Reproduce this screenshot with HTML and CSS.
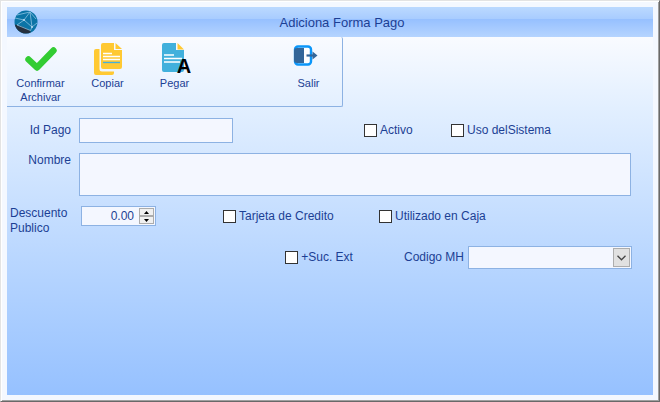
FILE: index.html
```html
<!DOCTYPE html>
<html lang="es">
<head>
    <meta charset="UTF-8">
    <meta name="viewport" content="width=device-width, initial-scale=1.0">
    <title>Adiciona Forma Pago</title>
    <link rel="stylesheet" href="styles.css">
</head>
<body>
    <div class="window">
        <header class="titlebar">
            <svg class="logo" viewBox="0 0 24 24" aria-hidden="true">
                <circle cx="12" cy="12" r="11.5" fill="#0b74a6"/>
                <path d="M0.8 14.5 L7 16 L16.5 20.5 L16.5 22.6 A11.5 11.5 0 0 1 0.8 14.5Z" fill="#26303f"/>
                <path d="M3 5 L16 2 L10 10 L1 8 M16 2 L18 17 L10 10 L3 15 L16.500 20.500 L18 17 L23 13 M16 2 L22 9" fill="none" stroke="#8cc3e2" stroke-width="0.8"/>
                <circle cx="10" cy="10" r="1.1" fill="#b5d8ee"/>
                <circle cx="18" cy="17" r="1" fill="#b5d8ee"/>
            </svg>
            <h1>Adiciona Forma Pago</h1>
        </header>

        <main class="content">
            <div class="toolbar">
                <button type="submit" form="formaPago" class="tool">
                    <svg viewBox="0 0 33 34" aria-hidden="true">
                        <path d="M4.500 17.500 L13 25.500 L29.500 8.500" fill="none" stroke="#33cc33" stroke-width="6.400" stroke-linecap="round" stroke-linejoin="round"/>
                    </svg>
                    <span>Confirmar Archivar</span>
                </button>
                <button type="button" class="tool">
                    <svg viewBox="0 0 33 34" aria-hidden="true">
                        <path d="M5 7 H8.500 V27 Q8.500 29.500 11 29.500 H23 V31 Q23 33 21 33 H5 Q3 33 3 31 V9 Q3 7 5 7Z" fill="#ffc933"/>
                        <path d="M12 1 H23 V8 H31 V25 Q31 27 29 27 H12 Q10 27 10 25 V3 Q10 1 12 1Z" fill="#ffc933"/>
                        <path d="M24.500 1 L31 7 H24.500Z" fill="#ffc933"/>
                        <path d="M12 11.500 H21 M12 14.500 H29 M12 17.500 H29" stroke="#fff" stroke-width="1.300"/>
                        <path d="M12 20.500 H29" stroke="#45b0dd" stroke-width="1.300"/>
                    </svg>
                    <span>Copiar</span>
                </button>
                <button type="button" class="tool">
                    <svg viewBox="0 0 33 34" aria-hidden="true">
                        <path d="M6 1 H18 V8 H26 V28 Q26 30 24 30 H6 Q4 30 4 28 V3 Q4 1 6 1Z" fill="#41b0dc"/>
                        <path d="M19.500 1 L26 7.500 H19.500Z" fill="#ffc933"/>
                        <path d="M6 13 H16 M6 16.500 H24 M6 20 H22" stroke="#fff" stroke-width="1.300"/>
                        <text x="26" y="31" class="paste-letter">A</text>
                    </svg>
                    <span>Pegar</span>
                </button>
                <button type="button" class="tool tool-exit">
                    <svg viewBox="0 0 33 34" aria-hidden="true">
                        <rect x="3" y="4.500" width="16" height="18" rx="3" fill="#fff" stroke="#0a96fa" stroke-width="2.400"/>
                        <path d="M2 9 Q2 6 5 6 H12 V21 H5 Q2 21 2 18Z" fill="#336699"/>
                        <path d="M14.500 13.500 H23" stroke="#336699" stroke-width="2.200"/>
                        <path d="M20.500 9.500 L25.500 13.500 L20.500 17.500Z" fill="#336699"/>
                    </svg>
                    <span>Salir</span>
                </button>
            </div>

            <form id="formaPago" class="form">
                <div class="row row-id">
                    <label class="caption" for="idPago">Id Pago</label>
                    <input type="text" id="idPago" class="box id-box">
                    <label class="check active"><input type="checkbox">Activo</label>
                    <label class="check"><input type="checkbox">Uso delSistema</label>
                </div>

                <div class="row">
                    <label class="caption" for="nombre">Nombre</label>
                    <textarea id="nombre" class="box name-box"></textarea>
                </div>

                <div class="row">
                    <label class="caption caption-left" for="descuento">Descuento Publico</label>
                    <div class="box spinner">
                        <input type="text" id="descuento" value="0.00" inputmode="decimal">
                        <div class="spin-buttons">
                            <button type="button" aria-label="Subir"><svg viewBox="0 0 5 3"><path d="M0 3 L2.500 0 L5 3Z"/></svg></button>
                            <button type="button" aria-label="Bajar"><svg viewBox="0 0 5 3"><path d="M0 0 L2.500 3 L5 0Z"/></svg></button>
                        </div>
                    </div>
                    <label class="check card"><input type="checkbox">Tarjeta de Credito</label>
                    <label class="check"><input type="checkbox">Utilizado en Caja</label>
                </div>

                <div class="row row-code">
                    <label class="check"><input type="checkbox">+Suc. Ext</label>
                    <label class="code-caption" for="codigoMh">Codigo MH</label>
                    <div class="combo">
                        <select id="codigoMh" class="box">
                            <option value=""></option>
                        </select>
                        <span class="combo-arrow">
                            <svg viewBox="0 0 9 6"><path d="M0.500 0.800 L4.500 4.800 L8.500 0.800" fill="none" stroke="#444" stroke-width="1.300"/></svg>
                        </span>
                    </div>
                </div>
            </form>
        </main>
    </div>
</body>
</html>
```
FILE: styles.css
```css
* {
    box-sizing: border-box;
}
body {
    margin: 0;
    font-family: "Liberation Sans", Arial, sans-serif;
    font-size: 12px;
    line-height: 15px;
    color: #1c3f94;
}
button, input, select, textarea {
    font: inherit;
    color: inherit;
    margin: 0;
}

/* window frame */
.window {
    display: flex;
    flex-direction: column;
    min-height: 100vh;
    padding: 6px;
    background-color: #f4f8ff;
    border: 1px solid;
    border-color: #e3e3e3 #696969 #696969 #e3e3e3;
    box-shadow: inset 1px 1px 0 #fff, inset -1px -1px 0 #a0a0a0;
}
.titlebar {
    display: flex;
    align-items: center;
    height: 30px;
    padding: 0 7px;
    background: linear-gradient(#bbd9ff 0%, #a8ccff 40%, #96c0ff 40%, #b5d4ff 100%);
}
.titlebar h1 {
    flex: 1;
    margin: 0;
    font-size: 13px;
    font-weight: normal;
    text-align: center;
}
.logo {
    width: 24px;
    height: 24px;
}
.content {
    flex: 1;
    background: linear-gradient(#f9fbff 0%, #e2efff 20%, #b3d3ff 68%, #96c1ff 100%);
}

/* toolbar */
.toolbar {
    display: flex;
    width: fit-content;
    height: 70px;
    border: solid #8db2e3;
    border-width: 0 1px 1px 0;
    border-radius: 0 2px 2px 0;
}
.tool {
    display: flex;
    flex-direction: column;
    align-items: center;
    width: 67px;
    padding: 5px 6px 0;
    border: none;
    background: none;
    font-size: 11px;
    line-height: 14px;
}
.tool svg {
    flex: none;
    width: 33px;
    height: 34px;
}
.tool-exit {
    margin-left: 67px;
}
.paste-letter {
    font-size: 20px;
    font-weight: bold;
    fill: #000;
    text-anchor: middle;
}

/* form */
.form {
    display: flex;
    flex-direction: column;
    gap: 10px;
    padding: 11px 22px 12px 0;
}
.row {
    display: flex;
    align-items: flex-start;
}
.row-id, .row-code {
    align-items: center;
}
.caption {
    flex: none;
    width: 72px;
    padding-right: 8px;
    text-align: right;
}
.caption-left {
    width: 74px;
    padding-left: 3px;
    text-align: left;
}
.box {
    border: 1px solid #8db2e3;
    border-radius: 0;
    background-color: #f4f7ff;
    outline: none;
}
.id-box {
    width: 154px;
    height: 25px;
}
.name-box {
    flex: 1;
    height: 43px;
    resize: none;
}
.check {
    display: flex;
    align-items: center;
    gap: 3px;
    height: 21px;
    white-space: nowrap;
}
.check input {
    appearance: none;
    width: 13px;
    height: 13px;
    border: 1px solid #333;
    background-color: #fff;
}
.check input:checked {
    background-color: #1c3f94;
    box-shadow: inset 0 0 0 2px #fff;
}
.active {
    width: 87px;
    margin-left: 131px;
}
.card {
    width: 156px;
    margin-left: 67px;
}

.spinner {
    display: flex;
    width: 75px;
    height: 20px;
    padding: 1px;
}
.spinner input {
    flex: 1;
    min-width: 0;
    padding: 0 5px 0 0;
    border: none;
    background: none;
    text-align: right;
    outline: none;
}
.spin-buttons {
    display: flex;
    flex-direction: column;
    width: 15px;
}
.spin-buttons button {
    display: flex;
    flex: 1;
    align-items: center;
    justify-content: center;
    padding: 0;
    border: 1px solid #acacac;
    background-color: #f0f0f0;
}
.spin-buttons svg {
    width: 5px;
    height: 3px;
}

.row-code {
    justify-content: flex-end;
}
.code-caption {
    margin: 0 4px 0 51px;
}
.combo {
    position: relative;
    width: 164px;
    margin-right: -1px;
}
.combo select {
    display: block;
    width: 100%;
    height: 23px;
    appearance: none;
}
.combo-arrow {
    position: absolute;
    top: 2px;
    right: 2px;
    display: flex;
    align-items: center;
    justify-content: center;
    width: 17px;
    height: 19px;
    border: 1px solid #adadad;
    background-color: #e1e1e1;
    pointer-events: none;
}
.combo-arrow svg {
    width: 9px;
    height: 6px;
}
```
